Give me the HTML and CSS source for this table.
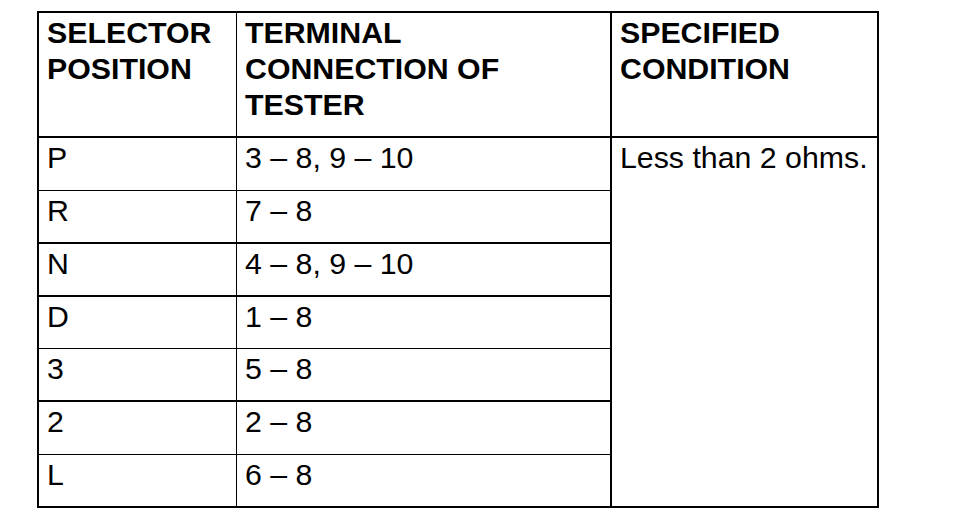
FILE: index.html
```html
<!DOCTYPE html>
<html>
<head>
<meta charset="utf-8">
<link rel="stylesheet" href="styles.css">
</head>
<body>
<div class="table">
  <div class="cell head c1 b1">SELECTOR<br>POSITION</div>
  <div class="cell head c2 b1">TERMINAL<br>CONNECTION OF<br>TESTER</div>
  <div class="cell head c3 b1">SPECIFIED<br>CONDITION</div>

  <div class="cell c1 r1 bt">P</div>
  <div class="cell c2 r1 bt">3 – 8, 9 – 10</div>
  <div class="cell c3 spec">Less than 2 ohms.</div>

  <div class="cell c1 r2 b2">R</div>
  <div class="cell c2 r2 b2">7 – 8</div>

  <div class="cell c1 r3 b2">N</div>
  <div class="cell c2 r3 b2">4 – 8, 9 – 10</div>

  <div class="cell c1 r4 bt">D</div>
  <div class="cell c2 r4 bt">1 – 8</div>

  <div class="cell c1 r5 b2">3</div>
  <div class="cell c2 r5 b2">5 – 8</div>

  <div class="cell c1 r6 bt">2</div>
  <div class="cell c2 r6 bt">2 – 8</div>

  <div class="cell c1 r7">L</div>
  <div class="cell c2 r7">6 – 8</div>
</div>
</body>
</html>
```

FILE: styles.css
```css
html, body {
  margin: 0;
  padding: 0;
  background: #fff;
}

body {
  font-family: "Liberation Sans", Arial, sans-serif;
  color: #000;
}

.table {
  display: grid;
  grid-template-columns: 198px 375px 265px;
  grid-template-rows: 125px 53px 53px 53px 52px 53px 53px 51px;
  width: max-content;
  margin: 11px 0 0 37px;
  border: 2px solid #000;
}

.cell {
  box-sizing: border-box;
  font-size: 30.3px;
  line-height: 36px;
  padding: 2px 8px 0 8px;
}

.head {
  font-weight: bold;
}

.c1 {
  grid-column: 1;
  border-right: 1px solid #000;
}

.c2 {
  grid-column: 2;
  border-right: 2px solid #000;
}

.c3 {
  grid-column: 3;
}

.b1 {
  border-bottom: 2px solid #000;
}

.bt {
  border-bottom: 1px solid #000;
}

.b2 {
  border-bottom: 2px solid #000;
}

.spec {
  grid-row: 2 / span 7;
}

.r1 { grid-row: 2; }
.r2 { grid-row: 3; }
.r3 { grid-row: 4; }
.r4 { grid-row: 5; }
.r5 { grid-row: 6; }
.r6 { grid-row: 7; }
.r7 { grid-row: 8; }
```
